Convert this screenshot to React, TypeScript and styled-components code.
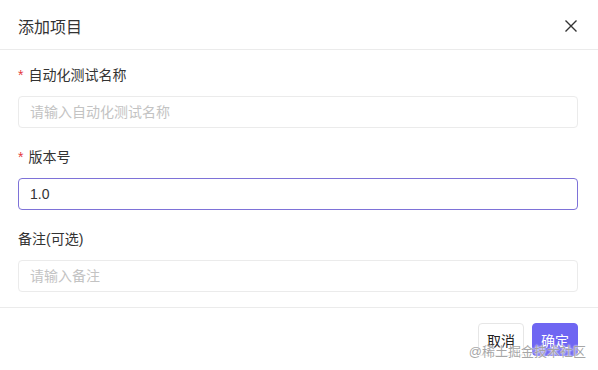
import React from 'react'
import styled, { createGlobalStyle } from 'styled-components'

const GlobalStyle = createGlobalStyle`
  html, body {
    margin: 0;
    padding: 0;
    background: #fff;
  }
  body {
    font-family: 'Liberation Sans', 'Noto Sans CJK SC', sans-serif;
  }
`

interface FieldProps {
  label: string
  required?: boolean
  placeholder?: string
  value?: string
  focused?: boolean
}

function Field({ label, required, placeholder, value, focused }: FieldProps) {
  return (
    <FieldWrap>
      <Label>
        {required && <Star>*</Star>}
        {label}
      </Label>
      <Input $focused={focused} placeholder={placeholder} defaultValue={value} readOnly />
    </FieldWrap>
  )
}

export default function App() {
  return (
    <>
      <GlobalStyle />
      <Dialog>
        <Header>
          <Title>添加项目</Title>
          <CloseButton aria-label="close">
            <svg width="14" height="14" viewBox="0 0 14 14">
              <path d="M1.5 1.5 L12.5 12.5 M12.5 1.5 L1.5 12.5" stroke="#333" strokeWidth="1.4" fill="none" />
            </svg>
          </CloseButton>
        </Header>
        <Body>
          <Field label="自动化测试名称" required placeholder="请输入自动化测试名称" />
          <Field label="版本号" required value="1.0" focused />
          <Field label="备注(可选)" placeholder="请输入备注" />
        </Body>
        <Footer>
          <Button>取消</Button>
          <Button $primary>确定</Button>
          <Watermark>@稀土掘金技术社区</Watermark>
        </Footer>
      </Dialog>
    </>
  )
}

const Dialog = styled.div`
  width: 598px;
  height: 370px;
  background: #fff;
  display: flex;
  flex-direction: column;
`

const Header = styled.div`
  height: 49px;
  padding: 0 18px;
  display: flex;
  align-items: center;
  justify-content: space-between;
  border-bottom: 1px solid #ebebeb;
  box-sizing: content-box;
`

const Title = styled.div`
  font-size: 16px;
  color: #333;
  margin-top: 2px;
`

const CloseButton = styled.button`
  border: none;
  background: none;
  padding: 0;
  margin-right: 2px;
  margin-top: 2px;
  display: flex;
  cursor: pointer;
`

const Body = styled.div`
  padding: 15px 20px 15px 18px;
  display: flex;
  flex-direction: column;
  gap: 19px;
  border-bottom: 1px solid #ebebeb;
`

const FieldWrap = styled.div`
  display: flex;
  flex-direction: column;
  gap: 11px;
`

const Label = styled.div`
  font-size: 14px;
  line-height: 20px;
  color: #333;
`

const Star = styled.span`
  color: #e4393c;
  margin-right: 5px;
`

const Input = styled.input<{ $focused?: boolean }>`
  height: 32px;
  box-sizing: border-box;
  border: 1px solid ${p => (p.$focused ? '#7e72d8' : '#ebebeb')};
  border-radius: 4px;
  padding: 0 11px;
  font-size: 14px;
  font-family: inherit;
  color: #333;
  outline: none;
  &::placeholder {
    color: #c3c3c3;
  }
`

const Footer = styled.div`
  position: relative;
  padding: 15px 20px 0 18px;
  display: flex;
  justify-content: flex-end;
  gap: 8px;
`

const Button = styled.button<{ $primary?: boolean }>`
  height: 33px;
  width: 46px;
  border-radius: 4px;
  font-size: 14px;
  font-family: inherit;
  border: 1px solid ${p => (p.$primary ? '#6f66f2' : '#e6e6e6')};
  background: ${p => (p.$primary ? '#6f66f2' : '#fff')};
  color: ${p => (p.$primary ? '#fff' : '#222')};
  padding: 0;
  cursor: pointer;
`

const Watermark = styled.span`
  position: absolute;
  right: 12px;
  top: 33px;
  font-size: 13px;
  color: rgba(150, 150, 150, 0.85);
  text-shadow: 0 0 2px #fff, 0 0 2px #fff;
  pointer-events: none;
`
